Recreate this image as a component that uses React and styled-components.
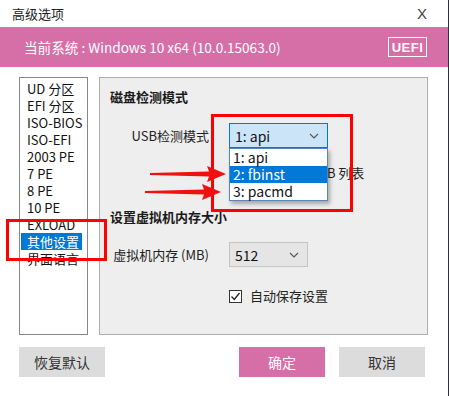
import React from "react";
import styled, { createGlobalStyle } from "styled-components";

const PINK = "#d66ea8";
const BLUE = "#0078d7";
const FONT = `"Noto Sans CJK SC", "Noto Sans", sans-serif`;

const GlobalStyle = createGlobalStyle`
  html, body { margin: 0; padding: 0; background: #fff; }
  * { box-sizing: border-box; }
  body { font-family: ${FONT}; color: #1a1a1a; }
`;

const menuItems = [
  "UD 分区",
  "EFI 分区",
  "ISO-BIOS",
  "ISO-EFI",
  "2003 PE",
  "7 PE",
  "8 PE",
  "10 PE",
  "EXLOAD",
  "其他设置",
  "界面语言",
];

const usbModes = ["1: api", "2: fbinst", "3: pacmd"];

const Chevron = () => (
  <svg width="10" height="6" viewBox="0 0 10 6">
    <polyline points="1,1 5,5 9,1" fill="none" stroke="#555" strokeWidth="1.1" />
  </svg>
);

const CheckMark = () => (
  <svg width="11" height="11" viewBox="0 0 11 11">
    <polyline points="1.5,5.5 4.3,8.5 9.5,2" fill="none" stroke="#222" strokeWidth="1.3" />
  </svg>
);

const Arrow = ({ x1, x2, y }) => (
  <polygon
    points={`${x1},${y - 1} ${x2 - 17},${y - 2.5} ${x2 - 19},${y - 8} ${x2},${y} ${x2 - 19},${y + 8} ${x2 - 17},${y + 2.5} ${x1},${y + 1}`}
    fill="#f01010"
  />
);

const App = () => {
  return (
    <Window>
      <GlobalStyle />
      <TitleBar>
        <span>高级选项</span>
        <Close>X</Close>
      </TitleBar>
      <Banner>
        <span>当前系统 : Windows 10 x64 (10.0.15063.0)</span>
        <Badge>UEFI</Badge>
      </Banner>
      <Body>
        <List>
          {menuItems.map((m) => (
            <ListItem key={m} $active={m === "其他设置"}>
              <span>{m}</span>
            </ListItem>
          ))}
        </List>
        <Panel>
          <Heading>磁盘检测模式</Heading>
          <FormRow $top={17}>
            <Label>USB检测模式</Label>
            <SelectWrap>
              <Select $open>
                <span>1: api</span>
                <Chevron />
              </Select>
              <Popup>
                {usbModes.map((o) => (
                  <Option key={o} $active={o === "2: fbinst"}>
                    {o}
                  </Option>
                ))}
              </Popup>
            </SelectWrap>
          </FormRow>
          <CheckRow $top={17} $gap={13}>
            <Box />
            <span>显示所有 USB 列表</span>
          </CheckRow>
          <Heading $top={27}>设置虚拟机内存大小</Heading>
          <FormRow $top={16}>
            <Label>虚拟机内存 (MB)</Label>
            <Select $width={79}>
              <span>512</span>
              <Chevron />
            </Select>
          </FormRow>
          <CheckRow $top={21}>
            <Box>
              <CheckMark />
            </Box>
            <span>自动保存设置</span>
          </CheckRow>
        </Panel>
      </Body>
      <Footer>
        <Button>恢复默认</Button>
        <Actions>
          <Button $primary>确定</Button>
          <Button>取消</Button>
        </Actions>
      </Footer>

      <Mark $x={6} $y={219} $w={101} $h={42} />
      <Mark $x={211} $y={114} $w={142} $h={98} />
      <Overlay width="449" height="396" viewBox="0 0 449 396">
        <Arrow x1={150} x2={226} y={174} />
        <Arrow x1={145} x2={221} y={192} />
      </Overlay>
    </Window>
  );
};

export default App;

const Window = styled.div`
  position: relative;
  width: 449px;
  height: 396px;
  background: #fff;
  border-right: 1px solid #2c2f3d;
  overflow: hidden;
  font-family: ${FONT};
`;

const TitleBar = styled.div`
  height: 27px;
  display: flex;
  align-items: center;
  justify-content: space-between;
  padding: 0 21px 0 12px;
  font-size: 13px;
  color: #222;
`;

const Close = styled.span`
  font-family: "Liberation Sans", sans-serif;
  font-size: 15px;
  color: #444;
`;

const Banner = styled.div`
  height: 40px;
  background: ${PINK};
  display: flex;
  align-items: center;
  justify-content: space-between;
  padding: 0 21px 0 24px;
  color: #fff;
  font-size: 13.6px;
`;

const Badge = styled.span`
  width: 39px;
  height: 20px;
  border: 1.5px solid #fff;
  display: flex;
  align-items: center;
  justify-content: center;
  font-family: "Liberation Sans", sans-serif;
  font-weight: bold;
  font-size: 13px;
  letter-spacing: 0.5px;
`;

const Body = styled.div`
  display: flex;
  gap: 11px;
  height: 268px;
  padding: 10px 20px 0 19px;
`;

const List = styled.div`
  width: 69px;
  height: 258px;
  border: 1px solid #828790;
  background: #fff;
  padding: 2px 0 0 1px;
  display: flex;
  flex-direction: column;
`;

const ListItem = styled.div`
  height: 17px;
  line-height: 17px;
  font-size: 13px;
  span {
    display: inline-block;
    padding: 0 3px 0 6px;
    background: ${(p) => (p.$active ? BLUE : "transparent")};
    color: ${(p) => (p.$active ? "#fff" : "#111")};
  }
`;

const Panel = styled.div`
  flex: 1;
  height: 258px;
  border: 1px solid #adadad;
  background: #eeeeee;
  padding: 10px 10px;
  display: flex;
  flex-direction: column;
`;

const Heading = styled.div`
  font-size: 13px;
  font-weight: bold;
  line-height: 18px;
  margin-top: ${(p) => p.$top || 0}px;
`;

const FormRow = styled.div`
  display: grid;
  grid-template-columns: 99px auto;
  column-gap: 20px;
  align-items: center;
  margin-top: ${(p) => p.$top || 0}px;
  font-size: 13px;
`;

const Label = styled.span`
  text-align: right;
  color: #222;
`;

const SelectWrap = styled.div`
  position: relative;
  width: 99px;
`;

const Select = styled.div`
  width: ${(p) => p.$width || 99}px;
  height: 25px;
  display: flex;
  align-items: center;
  justify-content: space-between;
  padding: 0 8px 0 5px;
  font-size: 14px;
  background: ${(p) => (p.$open ? "#cce4f7" : "#e5e5e5")};
  border: 1px solid ${(p) => (p.$open ? BLUE : "#c4c4c4")};
  color: #111;
`;

const Popup = styled.div`
  position: absolute;
  top: 25px;
  left: 0;
  width: 99px;
  background: #fff;
  border: 1px solid #5a86c0;
  box-shadow: 2px 3px 4px rgba(0, 0, 0, 0.3);
  z-index: 2;
`;

const Option = styled.div`
  height: 17px;
  line-height: 17px;
  padding-left: 3px;
  font-size: 14px;
  background: ${(p) => (p.$active ? BLUE : "#fff")};
  color: ${(p) => (p.$active ? "#fff" : "#111")};
`;

const CheckRow = styled.div`
  display: flex;
  align-items: center;
  gap: ${(p) => p.$gap || 8}px;
  margin-top: ${(p) => p.$top || 0}px;
  padding-left: 119px;
  font-size: 13px;
  line-height: 16px;
  color: #222;
`;

const Box = styled.span`
  width: 13px;
  height: 13px;
  border: 1px solid #333;
  background: #fff;
  display: flex;
  align-items: center;
  justify-content: center;
`;

const Footer = styled.div`
  display: flex;
  padding: 12px 23px 0 19px;
`;

const Actions = styled.div`
  margin-left: auto;
  display: flex;
  gap: 14px;
`;

const Button = styled.div`
  width: 86px;
  height: 30px;
  display: flex;
  align-items: center;
  justify-content: center;
  font-size: 14px;
  background: ${(p) => (p.$primary ? PINK : "#dcdcdc")};
  color: ${(p) => (p.$primary ? "#fff" : "#333")};
`;

const Mark = styled.div`
  position: absolute;
  left: ${(p) => p.$x}px;
  top: ${(p) => p.$y}px;
  width: ${(p) => p.$w}px;
  height: ${(p) => p.$h}px;
  border: 3px solid #f00;
  pointer-events: none;
  z-index: 3;
`;

const Overlay = styled.svg`
  position: absolute;
  left: 0;
  top: 0;
  pointer-events: none;
  z-index: 3;
`;
